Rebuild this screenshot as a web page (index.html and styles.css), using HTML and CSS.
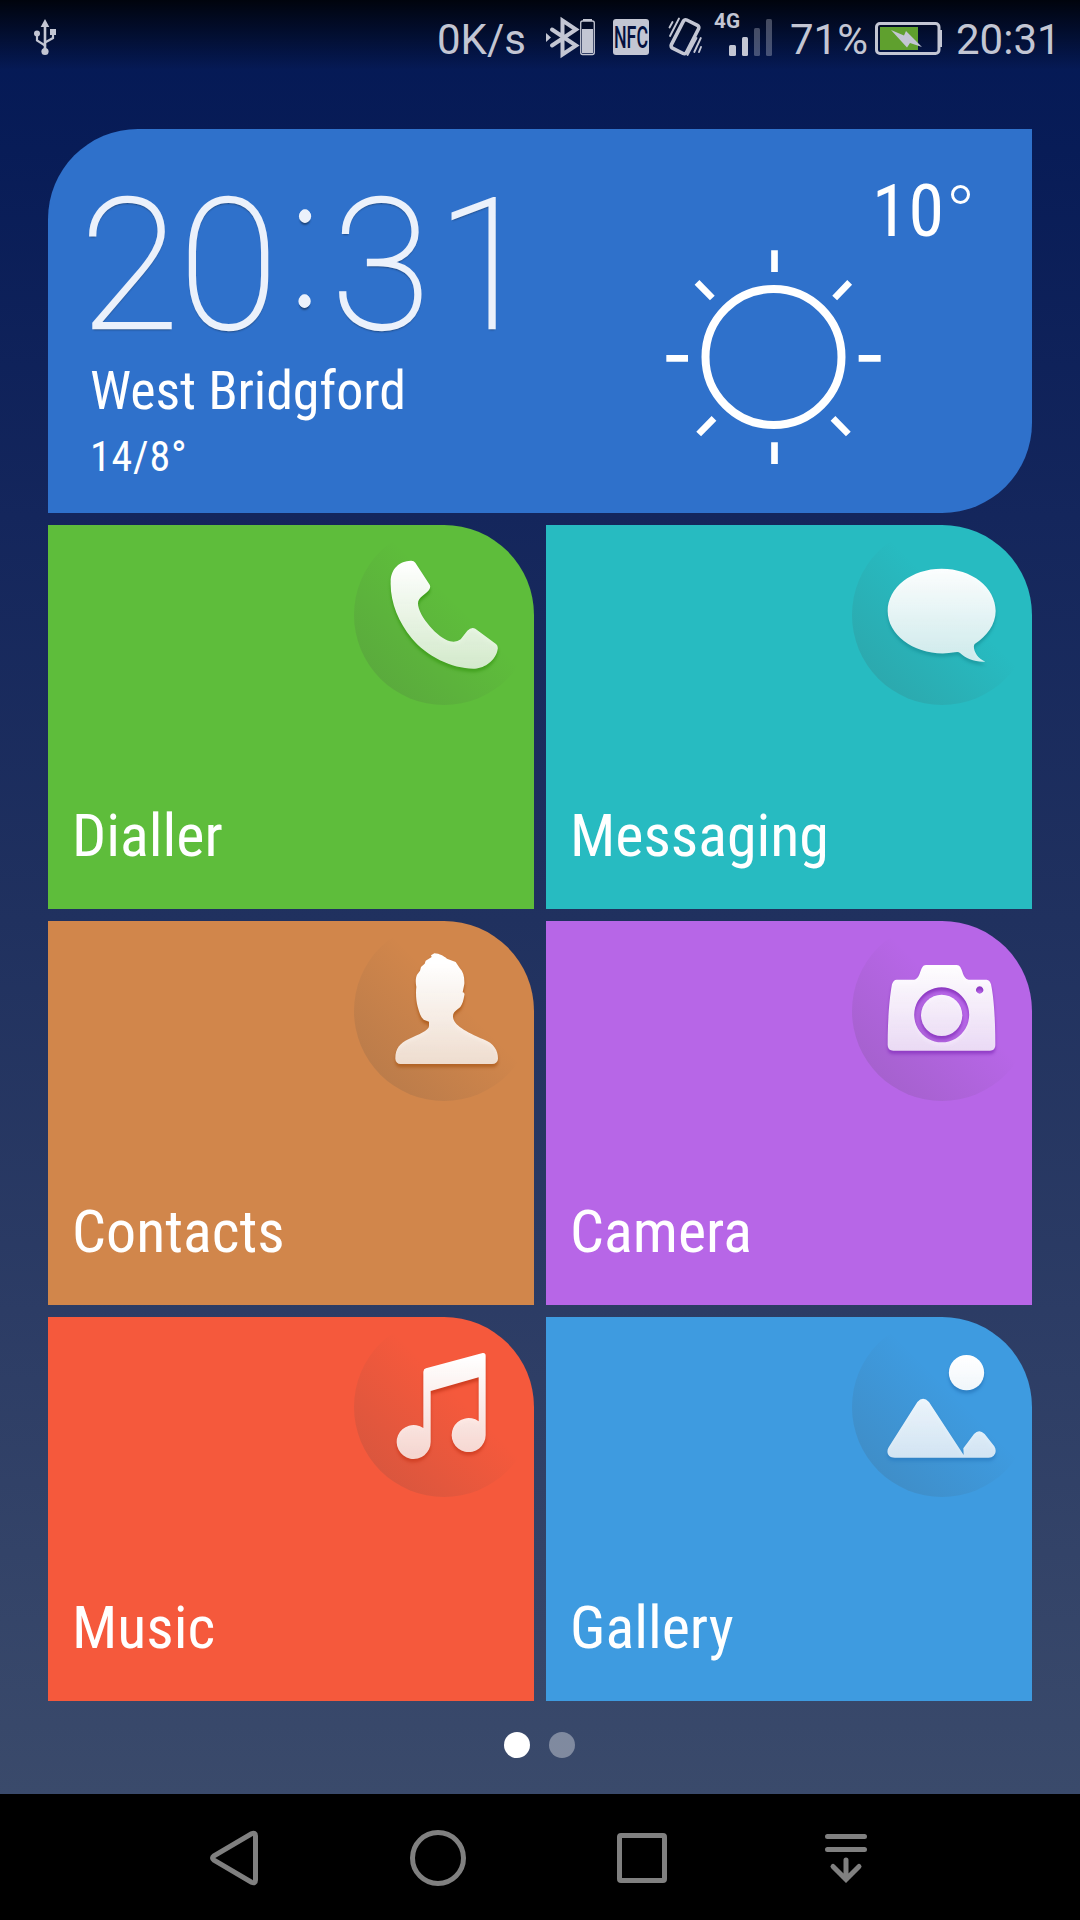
FILE: index.html
```html
<!DOCTYPE html>
<html lang="en">
<head>
    <meta charset="UTF-8">
    <meta name="viewport" content="width=device-width, initial-scale=1.0">
    <title>Home</title>
    <link rel="stylesheet" href="styles.css">
</head>
<body>
    <!-- Status bar -->
    <header class="status-bar">
        <svg class="usb" width="60" height="72" viewBox="0 0 60 72">
            <path d="M45 19l4.300 8h-3v25h-2.600V27h-3z"/>
            <circle cx="45" cy="51.500" r="3.600"/>
            <circle cx="37" cy="33.500" r="3"/>
            <rect x="50" y="29" width="6" height="6"/>
            <path class="line" d="M37 34v6.500l8 5M53 34v4l-8 4.500" stroke-width="2.200"/>
        </svg>
        <span class="speed">0K/s</span>
        <svg width="52" height="72" viewBox="545 0 52 72">
            <path d="M546 33l5 4.500-5 4.500z"/>
            <path class="line" d="M552 29.500l24 16-13.500 9V20.500L576 29.500l-24 16" stroke-width="4"/>
            <rect class="line" x="580.700" y="21" width="13.600" height="33.500" rx="2" stroke-width="1.300"/>
            <path d="M582 29h11v24h-11zM583 19h9v2h-9z"/>
        </svg>
        <svg width="60" height="72" viewBox="597 0 60 72">
            <rect x="613" y="19" width="36" height="36" rx="3"/>
            <text class="nfc" x="614" y="48" textLength="34" lengthAdjust="spacingAndGlyphs">NFC</text>
        </svg>
        <svg width="53" height="72" viewBox="657 0 53 72">
            <rect class="line" x="676.500" y="21" width="17" height="31.500" rx="2.500" stroke-width="3.600" transform="rotate(27 685 36.700)"/>
            <path class="line" d="M672.500 22l-3 5.500M679 18.500l-9 17.500M696.500 38l-9 17M700.800 38l-6.500 14M701 47l-2 5" stroke-width="1.900"/>
        </svg>
        <svg width="70" height="72" viewBox="710 0 70 72">
            <text class="net" x="714" y="28" textLength="26" lengthAdjust="spacingAndGlyphs">4G</text>
            <rect x="729" y="45" width="7" height="11" rx="1.500"/>
            <rect x="742" y="37" width="6" height="19" rx="1.500"/>
            <g opacity=".35">
                <rect x="754" y="28" width="6" height="28" rx="1.500"/>
                <rect x="766" y="19" width="6" height="37" rx="1.500"/>
            </g>
        </svg>
        <span class="percent">71%</span>
        <svg width="75" height="72" viewBox="872 0 75 72">
            <rect class="line" x="876.500" y="23.500" width="62.500" height="30" rx="3.500" stroke-width="3"/>
            <path d="M940 30h2v17h-2z"/>
            <path class="charge" d="M880 27h38v23h-38z"/>
            <path d="M891 30l13 5.500 2-4.500 9 9 7 7-12-4-3 4.500z"/>
        </svg>
        <span class="time">20:31</span>
    </header>

    <main>
        <!-- Clock and weather -->
        <section class="weather">
            <div class="place">
                <div class="clock">20<span class="colon">:</span>3<span class="last">1</span></div>
                <div class="city cond">West Bridgford</div>
                <div class="range cond">14/8°</div>
            </div>
            <div class="now">
                <div class="temp"><span class="cond">10</span><i></i></div>
                <svg class="sun" viewBox="318 387 648 648">
                    <circle cx="640.500" cy="711" r="204" stroke-width="24"/>
                    <path d="M643.500 391v65M643.500 967v65M319 715h65M896 715h66M411 487l46 47M869 487l-45 47M416 942l46-47M865 942l-46-47" stroke-width="20"/>
                </svg>
            </div>
        </section>

        <!-- App tiles -->
        <section class="tiles">
            <a class="tile dialler">
                <svg viewBox="42 45 540 540">
                    <path fill="url(#shine)" d="M152 215C152 175 180 153 212 152Q221 151 226 158L269 224Q273 232 267 240C258 252 234 262 234 280C234 318 295 386 330 394Q350 398 362 388L382 362Q394 350 406 356L468 402Q475 408 473 418C468 450 435 475 405 476C340 478 260 440 215 385C175 335 150 275 152 215Z"/>
                </svg>
                <span class="cond">Dialler</span>
            </a>
            <a class="tile messaging">
                <svg viewBox="36 45 540 540">
                    <path fill="url(#shine)" d="M305 176C395 176 467 232 467 303C467 344 440 379 404 402C396 412 408 445 436 455C405 457 377 446 360 429Q355 424 345 427C240 445 143 383 143 303C143 232 215 176 305 176Z"/>
                </svg>
                <span class="cond">Messaging</span>
            </a>
            <a class="tile contacts">
                <svg viewBox="42 33 540 540">
                    <path fill="url(#shine)" d="M273 136L283 130C300 131 310 138 321 146L347 156L359 174C370 186 374 200 373 222L368 247Q375 247 373 256C370 272 368 282 361 291C352 300 339 304 339 320C340 345 378 365 430 388C462 400 474 422 474 446Q473 461 456 462H182Q167 461 166 446C166 415 180 400 205 388C235 373 267 362 267 348V335L251 329C241 320 238 307 233 290C228 272 227 248 229 231C226 214 227 203 231 194L240 182L243 171L254 161L257 152L275 141Z"/>
                </svg>
                <span class="cond">Contacts</span>
            </a>
            <a class="tile camera">
                <svg viewBox="36 33 540 540">
                    <path fill="url(#shine)" fill-rule="evenodd" d="M222 209C244 207 238 165 258 165H350C370 165 364 205 386 209H440Q449 210 453 223C463 270 466 340 466 405Q466 422 450 422H160Q143 422 143 405C143 340 147 270 156 223Q160 209 170 209ZM305 232a82.500 82.500 0 1 0 .1 0ZM419 229a11 11 0 1 0 .1 0Z"/>
                    <circle fill="url(#shine)" cx="305" cy="316" r="62"/>
                </svg>
                <span class="cond">Camera</span>
            </a>
            <a class="tile music">
                <svg viewBox="42 36 540 540">
                    <path fill="url(#shine)" d="M258 190L428 144Q437 143 437 152V391A51 51 0 1 1 416 349V217L272 258V411A51 51 0 1 1 250 369V200Q251 191 258 190Z"/>
                </svg>
                <span class="cond">Music</span>
            </a>
            <a class="tile gallery">
                <svg viewBox="36 36 540 540">
                    <circle fill="url(#shine)" cx="379.500" cy="203" r="53"/>
                    <path fill="url(#shine)" d="M232 291Q249 271 267 291L371 450L370 430L402 387Q417 370 434 387L463 424C473 440 463 458 446 458H164C145 458 137 442 146 427Z"/>
                </svg>
                <span class="cond">Gallery</span>
            </a>
        </section>

        <div class="dots"><b></b><b></b></div>
    </main>

    <!-- Navigation bar -->
    <nav class="nav-bar">
        <svg viewBox="132 1794 204 126"><path d="M255.500 1836v44q0 4-4 2.200l-37.500-22q-3-2.200 0-4.400l37.500-22q4-1.800 4 2.200z"/></svg>
        <svg viewBox="336 1794 204 126"><circle cx="438" cy="1858" r="25.500"/></svg>
        <svg viewBox="540 1794 204 126"><rect x="619.500" y="1835.500" width="45" height="45" rx="1.500"/></svg>
        <svg viewBox="744 1794 204 126"><path d="M827.500 1836.500h37M827.500 1849.500h37M846 1860v19M833 1866.500l13 13 13-13"/></svg>
    </nav>

    <svg width="0" height="0" class="defs">
        <linearGradient id="shine" gradientUnits="userSpaceOnUse" x1="300" y1="160" x2="300" y2="480">
            <stop offset="0" stop-color="#fff"/>
            <stop offset="1" stop-color="#fff" stop-opacity=".77"/>
        </linearGradient>
    </svg>
</body>
</html>
```

FILE: styles.css
```css
body {
    margin: 0;
    width: 1080px;
    height: 1920px;
    display: flex;
    flex-direction: column;
    overflow: hidden;
    font-family: Roboto, sans-serif;
    color: white;
    background: linear-gradient(rgba(0, 0, 0, 0.85), rgba(0, 0, 0, 0) 70px), linear-gradient(#031855, #14265c 515px, #20315f 920px, #2c3c65 1310px, #3a4a6b 1794px);
}
.cond {
    font-family: "Roboto Condensed", Roboto, sans-serif;
    font-stretch: 75%;
}
.defs {
    position: absolute;
}
.status-bar {
    display: flex;
    height: 79px;
    font-size: 42px;
    line-height: 79px;
    color: #c3c6d3;
}
.status-bar svg {
    flex: none;
    fill: #c3c6d3;
}
.status-bar .line {
    fill: none;
    stroke: #c3c6d3;
    stroke-linecap: round;
}
.status-bar .charge {
    fill: #5fa02e;
}
.status-bar span {
    flex: none;
    box-sizing: border-box;
}
.usb {
    margin-right: auto;
}
.status-bar .nfc {
    fill: #03103f;
    font-size: 32px;
    font-weight: 500;
}
.net {
    font-size: 20px;
    font-weight: 700;
}
.speed {
    width: 108px;
}
.percent {
    width: 92px;
    padding-left: 10px;
}
.time {
    width: 133px;
    padding-left: 9px;
}
main {
    flex: 1;
    padding: 50px 48px 0;
}
.weather {
    display: flex;
    justify-content: space-between;
    height: 384px;
    background-color: #2f71cb;
    border-radius: 90px 0;
}
.place {
    padding: 44px 0 0 42px;
}
.clock {
    margin-left: -10px;
    font-size: 181px;
    line-height: 186px;
    font-weight: 100;
    color: #ebf1fb;
    -webkit-text-stroke: 2.4px #ebf1fb;
    text-shadow: 0 2px 2px rgba(0, 0, 0, 0.4);
}
.clock .colon {
    margin: 0 10px 0 11px;
    font-size: 180px;
    line-height: 0;
    vertical-align: 23px;
    -webkit-text-stroke-width: 2.5px;
    text-shadow: 0 2px #ebf1fb, 0 -2px #ebf1fb, 0 4px 2px rgba(0, 0, 0, 0.4);
}
.clock .last {
    margin-left: 6px;
}
.city {
    font-size: 54px;
    line-height: 64px;
    letter-spacing: -0.1px;
}
.range {
    font-size: 42px;
    line-height: 48px;
    margin-top: 10px;
    letter-spacing: 0.8px;
}
.now {
    width: 366px;
    padding-top: 45px;
}
.temp {
    display: flex;
    justify-content: flex-end;
    padding-right: 62px;
    font-size: 72px;
    line-height: 76px;
    letter-spacing: 1px;
}
.temp i {
    box-sizing: border-box;
    width: 19px;
    height: 19px;
    margin: 11px 0 0 6px;
    border: 3px solid white;
    border-radius: 50%;
}
.sun {
    display: block;
    width: 216px;
    height: 216px;
    margin-top: -1px;
    fill: none;
    stroke: white;
}
.tiles {
    display: grid;
    grid-template-columns: 1fr 1fr;
    grid-auto-rows: 384px;
    gap: 12px;
    margin-top: 12px;
}
.tile {
    display: flex;
    flex-direction: column;
    justify-content: space-between;
    border-top-right-radius: 90px;
}
.tile svg {
    align-self: flex-end;
    width: 180px;
    height: 180px;
    border-radius: 50%;
    background: linear-gradient(45deg, rgba(70, 70, 70, 0.16) 12%, rgba(70, 70, 70, 0) 57%);
}
.tile path,
.tile circle {
    filter: drop-shadow(0 10px 5px var(--shade));
}
.tile span {
    padding: 0 0 38px 24px;
    font-size: 60px;
    line-height: 71px;
}
.dialler {
    --shade: #3c9c18;
    background-color: #5ebd3b;
}
.messaging {
    --shade: #1a979e;
    background-color: #27bbc1;
}
.contacts {
    --shade: #ae5c1c;
    background-color: #d1864b;
}
.camera {
    --shade: #8a35c0;
    background-color: #b766e7;
}
.music {
    --shade: #cd3c20;
    background-color: #f5593c;
}
.gallery {
    --shade: #2c7fc4;
    background-color: #3e9be0;
}
.dots {
    display: flex;
    justify-content: center;
    gap: 19px;
    margin: 31px 2px 0 0;
}
.dots b {
    width: 26px;
    height: 26px;
    border-radius: 50%;
    background-color: white;
}
.dots b + b {
    opacity: 0.36;
}
.nav-bar {
    display: flex;
    justify-content: center;
    height: 126px;
    background-color: black;
}
.nav-bar svg {
    width: 204px;
    height: 126px;
    fill: none;
    stroke: #808080;
    stroke-width: 5;
    stroke-linecap: round;
}
```
